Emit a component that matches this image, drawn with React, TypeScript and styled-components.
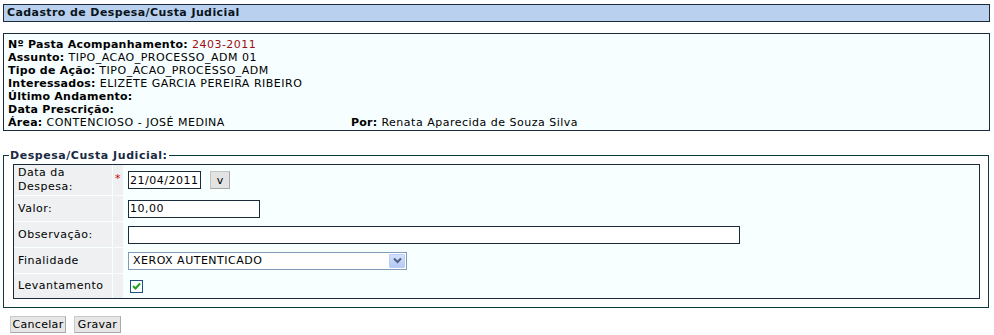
import React from 'react';
import styled, { createGlobalStyle } from 'styled-components';

const GlobalStyle = createGlobalStyle`
  body {
    margin: 0;
    background: #ffffff;
    font-family: 'DejaVu Sans', Verdana, sans-serif;
    font-size: 11px;
    letter-spacing: 0.5px;
    color: #000;
  }
`;

const Page = styled.div`
  padding: 4px 4px 0 3px;
`;

const TitleBar = styled.div`
  height: 16px;
  line-height: 16px;
  border: 1px solid #1c2b3c;
  background: #b9d1ee;
  font-weight: bold;
  letter-spacing: 0.4px;
  padding-left: 3px;
  color: #0a1420;
`;

const InfoBox = styled.div`
  margin-top: 11px;
  border: 1px solid #1c2b3c;
  background: #f7feff;
  padding: 4px 4px 1px 4px;
`;

const InfoLine = styled.div`
  line-height: 13px;
  white-space: nowrap;
  display: flex;
`;

const InfoCell = styled.span<{ $width?: number }>`
  ${(p) => (p.$width ? `width: ${p.$width}px;` : '')}
`;

const Key = styled.b`
  letter-spacing: 0.25px;
`;

const Red = styled.span`
  color: #9b1010;
`;

const Fieldset = styled.fieldset`
  margin: 18px 1px 0 0;
  border: 1px solid #0b3838;
  padding: 2px 8px 8px 9px;
`;

const Legend = styled.legend`
  font-weight: bold;
  letter-spacing: 0.55px;
  color: #1a2a44;
  padding: 0 1px;
  margin-left: -4px;
  font-size: 11px;
`;

const FormTable = styled.div`
  border: 1px solid #1c2b3c;
  background: #f7ffff;
  display: grid;
  grid-template-columns: 98px 10px 1fr;
  grid-template-rows: 30px 25px 25px 25px 24px;
  column-gap: 1px;
  row-gap: 1px;
`;

const LabelCell = styled.div`
  background: #eef0f2;
  padding: 0 4px;
  display: flex;
  align-items: center;
  line-height: 14px;
`;

const StarCell = styled.div`
  background: #eef0f2;
  color: #d00000;
  display: flex;
  align-items: center;
  justify-content: center;
  padding-bottom: 4px;
`;

const ValueCell = styled.div`
  padding-left: 4px;
  display: flex;
  align-items: center;
  gap: 9px;
`;

const TextInput = styled.input<{ $w: number }>`
  box-sizing: border-box;
  width: ${(p) => p.$w}px;
  height: 18px;
  border: 1px solid #1c2b3c;
  padding: 0 1px;
  font-family: 'DejaVu Sans', Verdana, sans-serif;
  font-size: 11px;
  letter-spacing: 0.5px;
  background: #fff;
  color: #000;
  outline: none;
`;

const SmallButton = styled.button<{ $w: number }>`
  box-sizing: border-box;
  width: ${(p) => p.$w}px;
  height: 18px;
  background: #e3e3e3;
  border: 1px solid #c4c4c4;
  border-right-color: #a6a6a6;
  border-bottom-color: #a6a6a6;
  font-family: 'DejaVu Sans', Verdana, sans-serif;
  font-size: 11px;
  color: #000;
  padding: 0;
  line-height: 15px;
`;

const SelectBox = styled.div`
  box-sizing: border-box;
  width: 279px;
  height: 18px;
  border: 1px solid #7f9db9;
  background: #fff;
  display: flex;
  align-items: center;
  justify-content: space-between;
  padding-left: 4px;
  padding-right: 1px;
`;

const SelectArrow = styled.div`
  width: 16px;
  height: 14px;
  background: linear-gradient(#d4e1fb, #b4c9f5);
  border: 1px solid #b9cdf6;
  border-radius: 1px;
  box-sizing: border-box;
  display: flex;
  align-items: center;
  justify-content: center;
`;

const CheckBox = styled.div`
  box-sizing: border-box;
  width: 13px;
  height: 13px;
  margin-left: 2px;
  border: 1px solid #1c5180;
  background: #fff;
  display: flex;
  align-items: center;
  justify-content: center;
`;

const Actions = styled.div`
  display: flex;
  gap: 8px;
  padding: 8px 0 0 7px;
`;

const ActionButton = styled.button<{ $w: number }>`
  box-sizing: border-box;
  width: ${(p) => p.$w}px;
  height: 17px;
  background: #e6e6e6;
  border: 1px solid #c8c8c8;
  border-right-color: #a9a9a9;
  border-bottom-color: #a9a9a9;
  font-family: 'DejaVu Sans', Verdana, sans-serif;
  font-size: 11px;
  letter-spacing: 0.3px;
  color: #000;
  padding: 0;
  line-height: 14px;
`;

export default function App() {
  return (
    <Page>
      <GlobalStyle />
      <TitleBar>Cadastro de Despesa/Custa Judicial</TitleBar>

      <InfoBox>
        <InfoLine>
          <Key>Nº Pasta Acompanhamento:</Key>&nbsp;<Red>2403-2011</Red>
        </InfoLine>
        <InfoLine>
          <Key>Assunto:</Key>&nbsp;TIPO_ACAO_PROCESSO_ADM 01
        </InfoLine>
        <InfoLine>
          <Key>Tipo de Ação:</Key>&nbsp;TIPO_ACAO_PROCESSO_ADM
        </InfoLine>
        <InfoLine>
          <Key>Interessados:</Key>&nbsp;ELIZETE GARCIA PEREIRA RIBEIRO
        </InfoLine>
        <InfoLine>
          <Key>Último Andamento:</Key>
        </InfoLine>
        <InfoLine>
          <Key>Data Prescrição:</Key>
        </InfoLine>
        <InfoLine>
          <InfoCell $width={343}>
            <Key>Área:</Key> CONTENCIOSO - JOSÉ MEDINA
          </InfoCell>
          <InfoCell>
            <Key>Por:</Key> Renata Aparecida de Souza Silva
          </InfoCell>
        </InfoLine>
      </InfoBox>

      <Fieldset>
        <Legend>Despesa/Custa Judicial:</Legend>
        <FormTable>
          <LabelCell>
            Data da
            <br />
            Despesa:
          </LabelCell>
          <StarCell>*</StarCell>
          <ValueCell>
            <TextInput $w={73} defaultValue="21/04/2011" />
            <SmallButton $w={20}>v</SmallButton>
          </ValueCell>

          <LabelCell>Valor:</LabelCell>
          <StarCell />
          <ValueCell>
            <TextInput $w={132} defaultValue="10,00" />
          </ValueCell>

          <LabelCell>Observação:</LabelCell>
          <StarCell />
          <ValueCell>
            <TextInput $w={612} defaultValue="" />
          </ValueCell>

          <LabelCell>Finalidade</LabelCell>
          <StarCell />
          <ValueCell>
            <SelectBox>
              <span>XEROX AUTENTICADO</span>
              <SelectArrow>
                <svg width="9" height="7" viewBox="0 0 9 7">
                  <path d="M1 1.5 L4.5 5 L8 1.5" fill="none" stroke="#4d6185" strokeWidth="2" />
                </svg>
              </SelectArrow>
            </SelectBox>
          </ValueCell>

          <LabelCell>Levantamento</LabelCell>
          <StarCell />
          <ValueCell>
            <CheckBox>
              <svg width="9" height="8" viewBox="0 0 9 8">
                <path d="M1 4 L3.5 6.5 L8 1.5" fill="none" stroke="#21a121" strokeWidth="2" />
              </svg>
            </CheckBox>
          </ValueCell>
        </FormTable>
      </Fieldset>

      <Actions>
        <ActionButton $w={56}>Cancelar</ActionButton>
        <ActionButton $w={47}>Gravar</ActionButton>
      </Actions>
    </Page>
  );
}
